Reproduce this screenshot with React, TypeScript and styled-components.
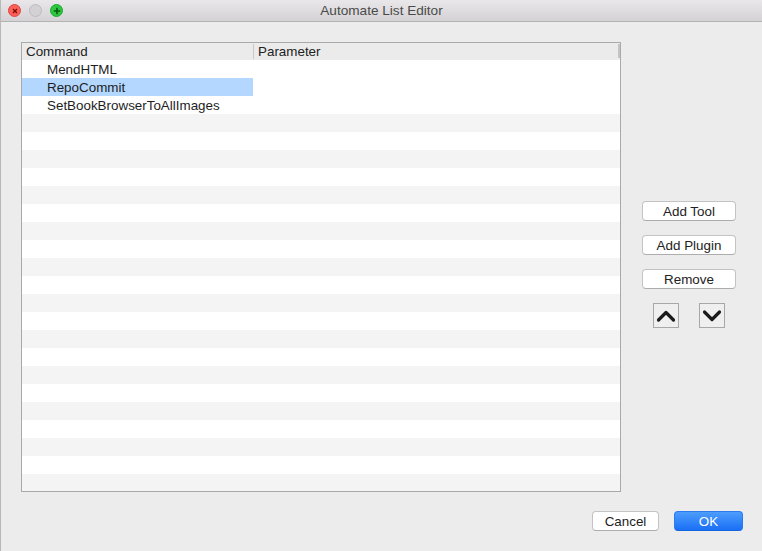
import React from "react";
import styled, { createGlobalStyle } from "styled-components";

const Global = createGlobalStyle`
  html, body { margin: 0; padding: 0; background: #ececec; }
  body { font-family: "Liberation Sans", Arial, sans-serif; font-size: 13.4px; color: #222; }
  * { box-sizing: border-box; }
`;

const Window = styled.div`
  width: 762px;
  height: 551px;
  display: flex;
  flex-direction: column;
  background: #ececec;
  border-left: 1px solid #b8b8b8;
  overflow: hidden;
`;

const TitleBar = styled.div`
  height: 22px;
  flex: none;
  display: flex;
  align-items: center;
  position: relative;
  background: linear-gradient(#e9e7e9, #d4d2d4);
  border-bottom: 1px solid #b3b3b3;
`;

const Lights = styled.div`
  display: flex;
  gap: 8px;
  padding-left: 7px;
`;

const Light = styled.div<{ $c: string; $b: string }>`
  width: 13px;
  height: 13px;
  border-radius: 50%;
  background: ${(p) => p.$c};
  border: 0.5px solid ${(p) => p.$b};
  display: flex;
  align-items: center;
  justify-content: center;
`;

const Title = styled.div`
  position: absolute;
  left: 0;
  right: 0;
  top: 0;
  bottom: 0;
  display: flex;
  align-items: center;
  justify-content: center;
  font-size: 13.6px;
  color: #4a4a4a;
  pointer-events: none;
`;

const Body = styled.div`
  flex: 1;
  display: flex;
  flex-direction: column;
  padding: 20px 19px 0 20px;
`;

const Main = styled.div`
  display: flex;
  align-items: flex-start;
`;

const Table = styled.div`
  width: 600px;
  height: 450px;
  border: 1px solid #a9a9a9;
  background: #fff;
  display: flex;
  flex-direction: column;
  overflow: hidden;
`;

const Header = styled.div`
  height: 17px;
  flex: none;
  display: grid;
  grid-template-columns: 231px 1fr;
  background: #ebebeb;
  position: relative;
`;

const HeadCell = styled.div<{ $div?: boolean }>`
  display: flex;
  align-items: center;
  padding-left: 4px;
  border-left: ${(p) => (p.$div ? "1px solid #c9c9c9" : "none")};
  margin: ${(p) => (p.$div ? "1px 0" : "0")};
  color: #222;
  font-size: 13.4px;
`;

const ScrollMark = styled.div`
  position: absolute;
  right: 0;
  top: 1px;
  width: 2px;
  height: 14px;
  background: #c4c4c4;
`;

const Row = styled.div<{ $alt: boolean }>`
  height: 18px;
  flex: none;
  display: grid;
  grid-template-columns: 231px 1fr;
  background: ${(p) => (p.$alt ? "#f4f4f4" : "#ffffff")};
`;

const Cell = styled.div<{ $sel?: boolean }>`
  display: flex;
  align-items: center;
  padding-left: 25px;
  font-size: 13.4px;
  color: #1e1e1e;
  background: ${(p) => (p.$sel ? "#b3d7ff" : "transparent")};
`;

const Side = styled.div`
  margin-left: 21px;
  margin-top: 159px;
  width: 94px;
  display: flex;
  flex-direction: column;
  gap: 14px;
`;

const Button = styled.button<{ $primary?: boolean; $w?: number }>`
  height: 20px;
  width: ${(p) => (p.$w ? `${p.$w}px` : "100%")};
  padding: 0;
  font-family: "Liberation Sans", Arial, sans-serif;
  font-size: 13.4px;
  border-radius: 4px;
  border: 1px solid ${(p) => (p.$primary ? "#2b7bf0" : "#c3c3c3")};
  border-bottom-color: ${(p) => (p.$primary ? "#1565e0" : "#adadad")};
  background: ${(p) =>
    p.$primary ? "linear-gradient(#4d9dfc, #1a6ff6)" : "#ffffff"};
  color: ${(p) => (p.$primary ? "#ffffff" : "#222")};
  display: flex;
  align-items: center;
  justify-content: center;
`;

const Arrows = styled.div`
  display: flex;
  gap: 20px;
  padding-left: 11px;
`;

const ArrowBtn = styled.div`
  width: 26px;
  height: 25px;
  border: 1px solid #a8a8a8;
  background: #efefef;
  display: flex;
  align-items: center;
  justify-content: center;
`;

const Footer = styled.div`
  display: flex;
  justify-content: flex-end;
  gap: 15px;
  margin-top: 19px;
`;

const ROWS = 24;
const items = ["MendHTML", "RepoCommit", "SetBookBrowserToAllImages"];

export default function App() {
  return (
    <>
      <Global />
      <Window>
        <TitleBar>
          <Lights>
            <Light $c="#fc5f57" $b="#df4640">
              <svg width="6" height="6" viewBox="0 0 6 6">
                <path d="M1 1L5 5M5 1L1 5" stroke="#7c0a02" strokeWidth="1.3" />
              </svg>
            </Light>
            <Light $c="#d3d1d3" $b="#bdbbbd" />
            <Light $c="#2dc840" $b="#1ea832">
              <svg width="8" height="8" viewBox="0 0 8 8">
                <path d="M4 0.8V7.2M0.8 4H7.2" stroke="#0a5a0e" strokeWidth="1.6" />
              </svg>
            </Light>
          </Lights>
          <Title>Automate List Editor</Title>
        </TitleBar>
        <Body>
          <Main>
            <Table>
              <Header>
                <HeadCell>Command</HeadCell>
                <HeadCell $div>Parameter</HeadCell>
                <ScrollMark />
              </Header>
              {Array.from({ length: ROWS }).map((_, i) => (
                <Row key={i} $alt={i % 2 === 1 && i !== 1}>
                  <Cell $sel={i === 1}>{items[i] ?? ""}</Cell>
                  <Cell />
                </Row>
              ))}
            </Table>
            <Side>
              <Button>Add Tool</Button>
              <Button>Add Plugin</Button>
              <Button>Remove</Button>
              <Arrows>
                <ArrowBtn>
                  <svg width="20" height="14" viewBox="0 0 20 14">
                    <path d="M2.5 11L10 3.5L17.5 11" fill="none" stroke="#1a1a1a" strokeWidth="3.2" strokeLinecap="round" strokeLinejoin="round" />
                  </svg>
                </ArrowBtn>
                <ArrowBtn>
                  <svg width="20" height="14" viewBox="0 0 20 14">
                    <path d="M2.5 3L10 10.5L17.5 3" fill="none" stroke="#1a1a1a" strokeWidth="3.2" strokeLinecap="round" strokeLinejoin="round" />
                  </svg>
                </ArrowBtn>
              </Arrows>
            </Side>
          </Main>
          <Footer>
            <Button $w={67}>Cancel</Button>
            <Button $w={69} $primary>OK</Button>
          </Footer>
        </Body>
      </Window>
    </>
  );
}
